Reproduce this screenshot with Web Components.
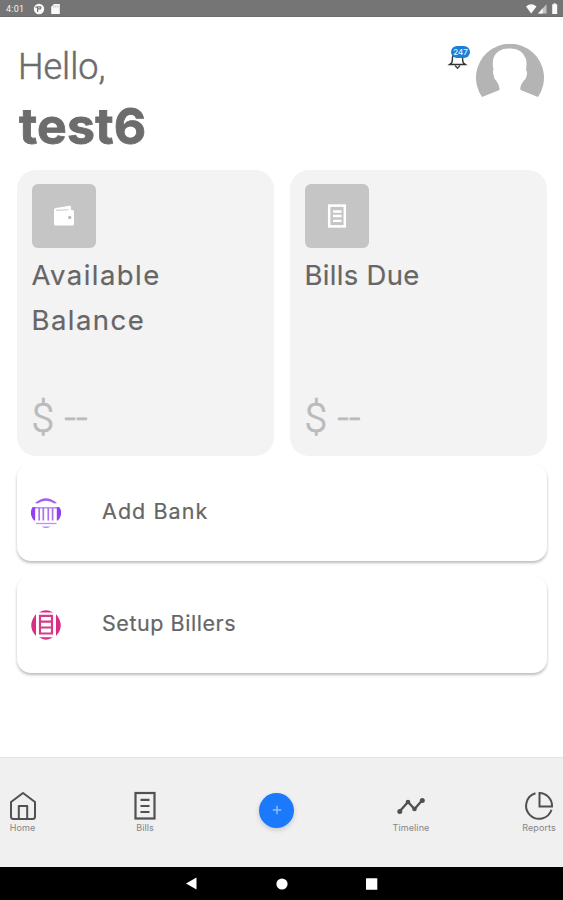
<!DOCTYPE html>
<html lang="en">
<head>
<meta charset="utf-8">
<title>Home</title>
<style>
body{margin:0;background:#fff;width:563px;height:900px;overflow:hidden;font-family:Inter,"Liberation Sans",sans-serif;color:#666}
</style>
</head>
<body>
<bill-app></bill-app>
<script>
const define = (name, html) => customElements.define(name, class extends HTMLElement {
  constructor() {
    super();
    const t = document.createElement('template');
    t.innerHTML = html;
    this.attachShadow({mode: 'open'}).append(t.content.cloneNode(true));
  }
});

define('status-bar', `<style>
:host{display:flex;box-sizing:border-box;height:17px;background:#757575;border-bottom:1px solid #6c6c6c;align-items:center;padding:1px 5px 0 6px;font:9px Roboto,sans-serif;color:#f2f2f2}
span{width:27px;letter-spacing:.2px}.right{margin-left:auto}svg{display:block}
</style><span>4:01</span>
<svg width="30" height="12" viewBox="0 0 30 12"><circle cx="6" cy="6" r="5.2" fill="#fafafa"/><path d="M4.6 9V3.8H7.2Q8.6 4 7.4 5.8H5.2M2.4 4.2H4.6" fill="none" stroke="#757575" stroke-width="1.2"/><path d="M21 .9h5.8v10.2h-8.6V3.8z" fill="#fafafa"/><path d="M20.8 2.6v1.8m2-1.8v1.8m2-1.8v1.8" stroke="#aaa" stroke-width=".8"/></svg>
<svg class="right" width="32" height="12" viewBox="0 0 32 12"><path d="M0 3.5Q5.2-.8 10.5 3.5L5.2 10.5z" fill="#fafafa"/><path d="M20.5 1.2v9.4H12z" fill="#c4c4c4"/><path d="M16.800 5.300v5.300H12z" fill="#f5f5f5"/><path d="M26.200 1.300h1.500V.3h2v1h1.500v9.600h-5z" fill="#fafafa"/></svg>`);

define('app-greeting', `<style>
:host{display:flex;flex-direction:column;color:#6c6c6c}
.hi{font:300 36px/42px Roboto,sans-serif;-webkit-text-stroke:.5px #6c6c6c;margin-top:1px}
.name{font-weight:700;font-size:50px;line-height:60px;margin-top:8px;margin-left:1px;letter-spacing:.2px;-webkit-text-stroke:.8px #6c6c6c}
</style><span class="hi"><slot name="hi"></slot></span><span class="name"><slot></slot></span>`);

define('alert-bell', `<style>
:host{display:block;position:relative;width:24px;height:27px}
svg{display:block}
b{position:absolute;left:4px;top:1px;width:19px;height:12px;border-radius:6px;background:#1c7fd6;color:#e8f3ff;font:500 8px/12px Inter,sans-serif;text-align:center}
</style><svg width="24" height="27" viewBox="0 0 24 27"><path d="M4.800 17.800Q5.500 16 5.500 12Q6.500 7 10.500 7Q14.500 7 15.500 12Q15.500 16 16.200 17.800L18.500 19.500H2.500Z" fill="none" stroke="#333" stroke-width="1.400"/><path d="M8 20.500L10.500 23.300L13 20.500" fill="none" stroke="#444" stroke-width="1.400"/></svg><b><slot></slot></b>`);

define('user-avatar', `<style>:host{display:block}svg{display:block}</style>
<svg width="70" height="70" viewBox="0 0 70 70"><path d="M7 53A34 34 0 1 1 63 53L45.500 46Q44.500 42 48.500 37Q52 34 52 29Q52 26.500 51 26Q52 20 51 15Q47 4 35 4.500Q22 4 18.500 14Q17 20 18.500 26Q17.500 27 18.500 31Q19 35 21.500 37Q25 42 24.500 46Z" fill="#b5b4b5"/></svg>`);

define('balance-card', `<style>
:host{display:flex;flex-direction:column;box-sizing:border-box;height:286px;border-radius:19px;background:#f3f3f3;padding:13.500px 14px 0 14.500px}
.tile{display:grid;place-items:center;width:64px;height:64px;border-radius:6px;background:#c5c5c5}
.title{font-weight:400;font-size:27.500px;line-height:45px;margin-top:5.500px;color:#666;width:170px;letter-spacing:var(--track,.3px);-webkit-text-stroke:.2px #666}
.sum{font:300 41px/48px Roboto,sans-serif;color:#bbb;-webkit-text-stroke:.7px #bbb;margin-top:auto;margin-bottom:14.500px}
</style><div class="tile"><slot name="icon"></slot></div><div class="title"><slot></slot></div><div class="sum"><slot name="sum"></slot></div>`);

define('action-row', `<style>
:host{display:flex;align-items:center;box-sizing:border-box;height:97px;border-radius:14px;background:#fff;padding:0 14px;box-shadow:0 2px 3px rgba(0,0,0,.27);font-size:21.500px;color:#666}
.icon{display:flex;width:71px}
.label{letter-spacing:var(--track,0);padding-bottom:3px;-webkit-text-stroke:.2px #666}
</style><div class="icon"><slot name="icon"></slot></div><span class="label"><slot></slot></span>`);

define('tab-item', `<style>
:host{display:flex;flex-direction:column;align-items:center;font:9px/12px Inter,sans-serif;color:#858585}
.box{display:grid;place-items:center;height:30px}
span{white-space:nowrap;margin-top:1.500px;letter-spacing:var(--track,.1px)}
</style><div class="box"><slot name="icon"></slot></div><span><slot></slot></span>`);

define('tab-bar', `<style>
:host{display:grid;box-sizing:border-box;height:110px;background:#f0f0f0;border-top:1.500px solid #e1e1e1;padding-top:32.500px;grid-template-columns:45px 200px 63px 206px 50px;align-items:start;justify-items:center}
button{width:35px;height:35px;margin:2px 0 0 0;padding:0;border:0;border-radius:50%;background:#1c79fb;box-shadow:0 2px 5px rgba(0,0,0,.17)}
button svg{display:block;margin:auto}
svg{display:block}
</style>
<tab-item><svg slot="icon" width="28" height="30" viewBox="0 0 28 30" fill="none" stroke="#505050" stroke-width="2" stroke-linejoin="round"><path d="M2 11L14 2L26 11V25.500Q26 28 23.500 28H4.500Q2 28 2 25.500Z"/><path d="M9.800 28V15H18.200V28"/></svg>Home</tab-item>
<tab-item><svg slot="icon" width="24" height="30" viewBox="0 0 24 30" fill="none" stroke="#505050" stroke-width="2.200"><rect x="2.500" y="2" width="19" height="25.500"/><path d="M7.500 8.800h9M7.500 15h9M7.500 21h9"/></svg>Bills</tab-item>
<button aria-label="Add"><svg width="10" height="10" viewBox="0 0 10 10"><path d="M5 .8v8.400M.8 5h8.400" stroke="#8ebfff" stroke-width="1.500"/></svg></button>
<tab-item><svg slot="icon" width="30" height="30" viewBox="0 0 30 30"><path d="M3.500 20.500L12 11L18.500 18L26 9.500" fill="none" stroke="#505050" stroke-width="2.300"/><g fill="#505050"><circle cx="3.800" cy="20.500" r="2.500"/><circle cx="12" cy="11" r="2.300"/><circle cx="18.500" cy="18" r="2.300"/><circle cx="26.300" cy="9.500" r="2.500"/></g></svg>Timeline</tab-item>
<tab-item><svg slot="icon" width="30" height="30" viewBox="0 0 30 30" fill="none" stroke="#505050" stroke-width="2"><path d="M11.500 2.300A13 13 0 1 0 27.500 18.800"/><path d="M15.500 2A12.800 12.800 0 0 1 28 15.500H15.500Z"/></svg>Reports</tab-item>`);

define('system-nav', `<style>
:host{display:flex;height:33px;background:#000;align-items:center;justify-content:center;gap:78px}
svg{display:block}
</style>
<svg width="12" height="13" viewBox="0 0 12 13"><path d="M0 6.500L10.500 .5V12.500Z" fill="#fff"/></svg>
<svg width="12" height="12" viewBox="0 0 12 12"><circle cx="6" cy="6" r="5.600" fill="#fff"/></svg>
<svg width="12" height="12" viewBox="0 0 12 12"><rect x="0" y=".2" width="11.300" height="11.600" rx=".6" fill="#fff"/></svg>`);

define('bill-app', `<style>
:host{display:flex;flex-direction:column;height:900px;background:#fff}
header{display:flex;height:153px;box-sizing:border-box;padding:28px 18px 0 18px;align-items:flex-start}
app-greeting{margin-right:auto}
alert-bell{margin:0 4px 0 0}
user-avatar{margin:-1.500px 0 0 0}
.cards{display:grid;grid-template-columns:256.500px 256.500px;gap:16.500px;padding:0 16.500px 0 17px}
.rows{display:flex;flex-direction:column;gap:15px;padding:8px 16.500px 0 17px}
tab-bar{margin-top:auto}
svg{display:block}
</style>
<status-bar></status-bar>
<header><app-greeting><span slot="hi">Hello,</span>test6</app-greeting><alert-bell>247</alert-bell><user-avatar></user-avatar></header>
<div class="cards">
<balance-card style="--track:1.450px"><svg slot="icon" width="22" height="22" viewBox="0 0 22 22"><path d="M1 5Q1 3.200 3 3L16.500 .8Q18 .6 18 2.200V5H19.500Q21 5 21 6.500V19Q21 20.500 19.500 20.500H2.500Q1 20.500 1 19Z" fill="#fff"/><path d="M3 5.300L15.500 4.800" stroke="#c8c8c8" stroke-width="1"/><circle cx="16.700" cy="12.500" r="1.700" fill="#bbb"/></svg>Available Balance<span slot="sum">$ --</span></balance-card>
<balance-card><svg slot="icon" width="20" height="24" viewBox="0 0 20 24"><rect x="2.200" y="1.600" width="15.600" height="20.800" fill="none" stroke="#fff" stroke-width="2.500"/><path d="M6 7.500h8.500M6 12h8.500M6 16.800h8.500" stroke="#fff" stroke-width="2.300"/></svg>Bills Due<span slot="sum">$ --</span></balance-card>
</div>
<div class="rows">
<action-row style="--track:1.050px"><svg slot="icon" width="30" height="32" viewBox="0 0 30 32"><defs><linearGradient id="v"><stop stop-color="#8f3df0"/><stop offset=".2" stop-color="#b57cf2"/><stop offset=".8" stop-color="#b57cf2"/><stop offset="1" stop-color="#8f3df0"/></linearGradient></defs><path d="M4 6Q15-3.500 26 6L23.500 6.500Q15 .8 6.500 6.500Z" fill="#a760ee"/><path d="M4.200 10.300V23.500H3Q-2.500 17 1.500 10.300ZM25.800 10.300V23.500H27Q32.500 17 28.500 10.300Z" fill="#9440ef"/><rect x="2" y="10.150" width="26" height="1.300" fill="url(#v)"/><path d="M8.200 11v12.500M12.300 11v12.500M17.300 11v12.500M21.600 11v12.500" stroke="#ad70ef" stroke-width="1.700"/><path d="M5 26.500H25.500" stroke="#bf91f3" stroke-width="1.300"/><path d="M10.500 29.500Q15 32.500 19.500 29.500Z" fill="#b987f4"/></svg>Add Bank</action-row>
<action-row style="--track:.55px"><svg slot="icon" width="30" height="32" viewBox="0 0 30 32" fill="#d92c82"><path d="M5 5V27Q-4.500 17 5 5ZM25 5V27Q34.500 17 25 5ZM8 3.500Q15-1 22 3.500ZM8 28.300H22Q15 33 8 28.300Z"/><path d="M9 6.800H21V24.500H9ZM9 12.600H21M9 18.500H21" fill="none" stroke="#d83a8a" stroke-width="2.200"/></svg>Setup Billers</action-row>
</div>
<tab-bar></tab-bar>
<system-nav></system-nav>`);
</script>
</body>
</html>
